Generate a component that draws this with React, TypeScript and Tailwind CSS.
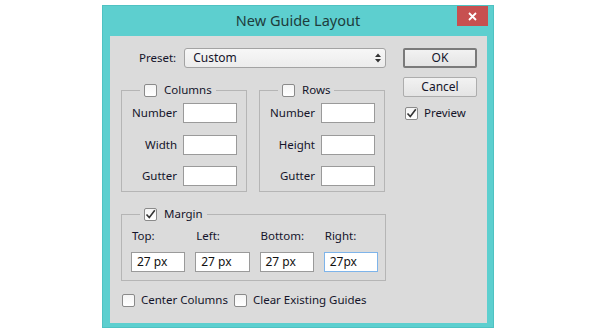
const FONT = { fontFamily: '"Noto Sans", "Open Sans", sans-serif' }

function CheckBox({ checked = false }: { checked?: boolean }) {
  return (
    <span className="flex h-[13px] w-[13px] shrink-0 items-center justify-center rounded-[2px] border border-[#8a8a8a] bg-gradient-to-b from-[#f4f4f4] to-[#ffffff]">
      {checked && (
        <svg width="11" height="11" viewBox="0 0 11 11" aria-hidden>
          <path d="M1.5 5.5 L4.3 8.6 L9.8 1.3" fill="none" stroke="#333" strokeWidth="1.6" />
        </svg>
      )}
    </span>
  )
}

function Field({ value = '', focused = false, className = '' }: { value?: string; focused?: boolean; className?: string }) {
  return (
    <div
      className={`flex h-[20px] items-center bg-white px-[5px] text-[12px] leading-none text-[#111] border ${
        focused ? 'border-[#7eb4ea]' : 'border-[#9a9a9a]'
      } ${className}`}
    >
      {value}
    </div>
  )
}

function Group({ label, rows }: { label: string; rows: string[] }) {
  return (
    <fieldset className="w-[126px] border border-[#b5b5b5] pb-[5px]">
      <legend className="ml-[18px] flex items-center gap-[7px] px-[4px]">
        <CheckBox />
        <span>{label}</span>
      </legend>
      <div className="mt-[5px] flex flex-col gap-[11.5px]">
        {rows.map((r) => (
          <div key={r} className="flex items-center gap-[6px]">
            <span className="w-[55px] text-right">{r}</span>
            <Field className="w-[54px]" />
          </div>
        ))}
      </div>
    </fieldset>
  )
}

export default function App() {
  const margins = [
    { label: 'Top:', value: '27 px' },
    { label: 'Left:', value: '27 px' },
    { label: 'Bottom:', value: '27 px' },
    { label: 'Right:', value: '27px', focused: true }
  ]

  return (
    <div className="h-[330px] w-[600px] bg-white pl-[102px] pt-[5px]" style={FONT}>
      <div className="flex h-[323px] w-[392px] flex-col border border-[#4fc2c2] bg-[#5dcfcf]">
        <div className="grid h-[30px] grid-cols-[1fr_auto_1fr]">
          <div />
          <div className="pt-[4px] text-[14.5px] text-[#1d3c3c]">New Guide Layout</div>
          <div className="flex justify-end pr-[5px]">
            <div className="flex h-[20px] w-[31px] items-center justify-center bg-[#c75050]">
              <svg width="9" height="9" viewBox="0 0 9 9" aria-hidden>
                <path d="M1 1 L8 8 M8 1 L1 8" stroke="#fff" strokeWidth="1.8" />
              </svg>
            </div>
          </div>
        </div>

        <div className="mb-[4px] ml-[7px] mr-[6px] flex flex-1 gap-[17px] bg-[#dbdbdb] pl-[11px] pr-[10px] pt-[12px] text-[11.5px] leading-[16px] text-[#14142a]">
          <div className="flex w-[265px] flex-col">
            <div className="flex h-[20px] items-center gap-[8px] pl-[18px]">
              <span>Preset:</span>
              <div className="flex h-[20px] flex-1 items-center justify-between rounded-[3px] border border-[#a3a3a3] bg-gradient-to-b from-[#f7f7f7] to-[#ececec] pl-[8px] pr-[4px]">
                <span className="text-[12px]">Custom</span>
                <svg width="6" height="10" viewBox="0 0 6 10" aria-hidden>
                  <path d="M0 4 L3 0.5 L6 4 Z M0 6 L3 9.5 L6 6 Z" fill="#333" />
                </svg>
              </div>
            </div>

            <div className="mt-[14px] flex gap-[12px]">
              <Group label="Columns" rows={['Number', 'Width', 'Gutter']} />
              <Group label="Rows" rows={['Number', 'Height', 'Gutter']} />
            </div>

            <fieldset className="mt-[14px] border border-[#b5b5b5] pb-[8px] pl-[9px] pr-[7px]">
              <legend className="ml-[9px] flex items-center gap-[7px] px-[4px]">
                <CheckBox checked />
                <span>Margin</span>
              </legend>
              <div className="mt-[6px] grid grid-cols-4 gap-x-[10px] gap-y-[8px]">
                {margins.map((m) => (
                  <span key={m.label} className="pl-[1px]">
                    {m.label}
                  </span>
                ))}
                {margins.map((m) => (
                  <Field key={m.label} value={m.value} focused={m.focused} />
                ))}
              </div>
            </fieldset>

            <div className="mt-[11px] flex items-center gap-[6px] pl-[1px]">
              <CheckBox />
              <span>Center Columns</span>
              <CheckBox />
              <span>Clear Existing Guides</span>
            </div>
          </div>

          <div className="flex w-[74px] flex-col">
            <button className="h-[20px] rounded-[2px] border-2 border-[#7a7a7a] bg-gradient-to-b from-[#f2f2f2] to-[#e4e4e4] text-[12px] leading-none">
              OK
            </button>
            <button className="mt-[9px] h-[20px] rounded-[2px] border border-[#adadad] bg-gradient-to-b from-[#f2f2f2] to-[#e4e4e4] text-[12px] leading-none">
              Cancel
            </button>
            <div className="mt-[8px] flex items-center gap-[6px] pl-[2px]">
              <CheckBox checked />
              <span>Preview</span>
            </div>
          </div>
        </div>
      </div>
    </div>
  )
}
